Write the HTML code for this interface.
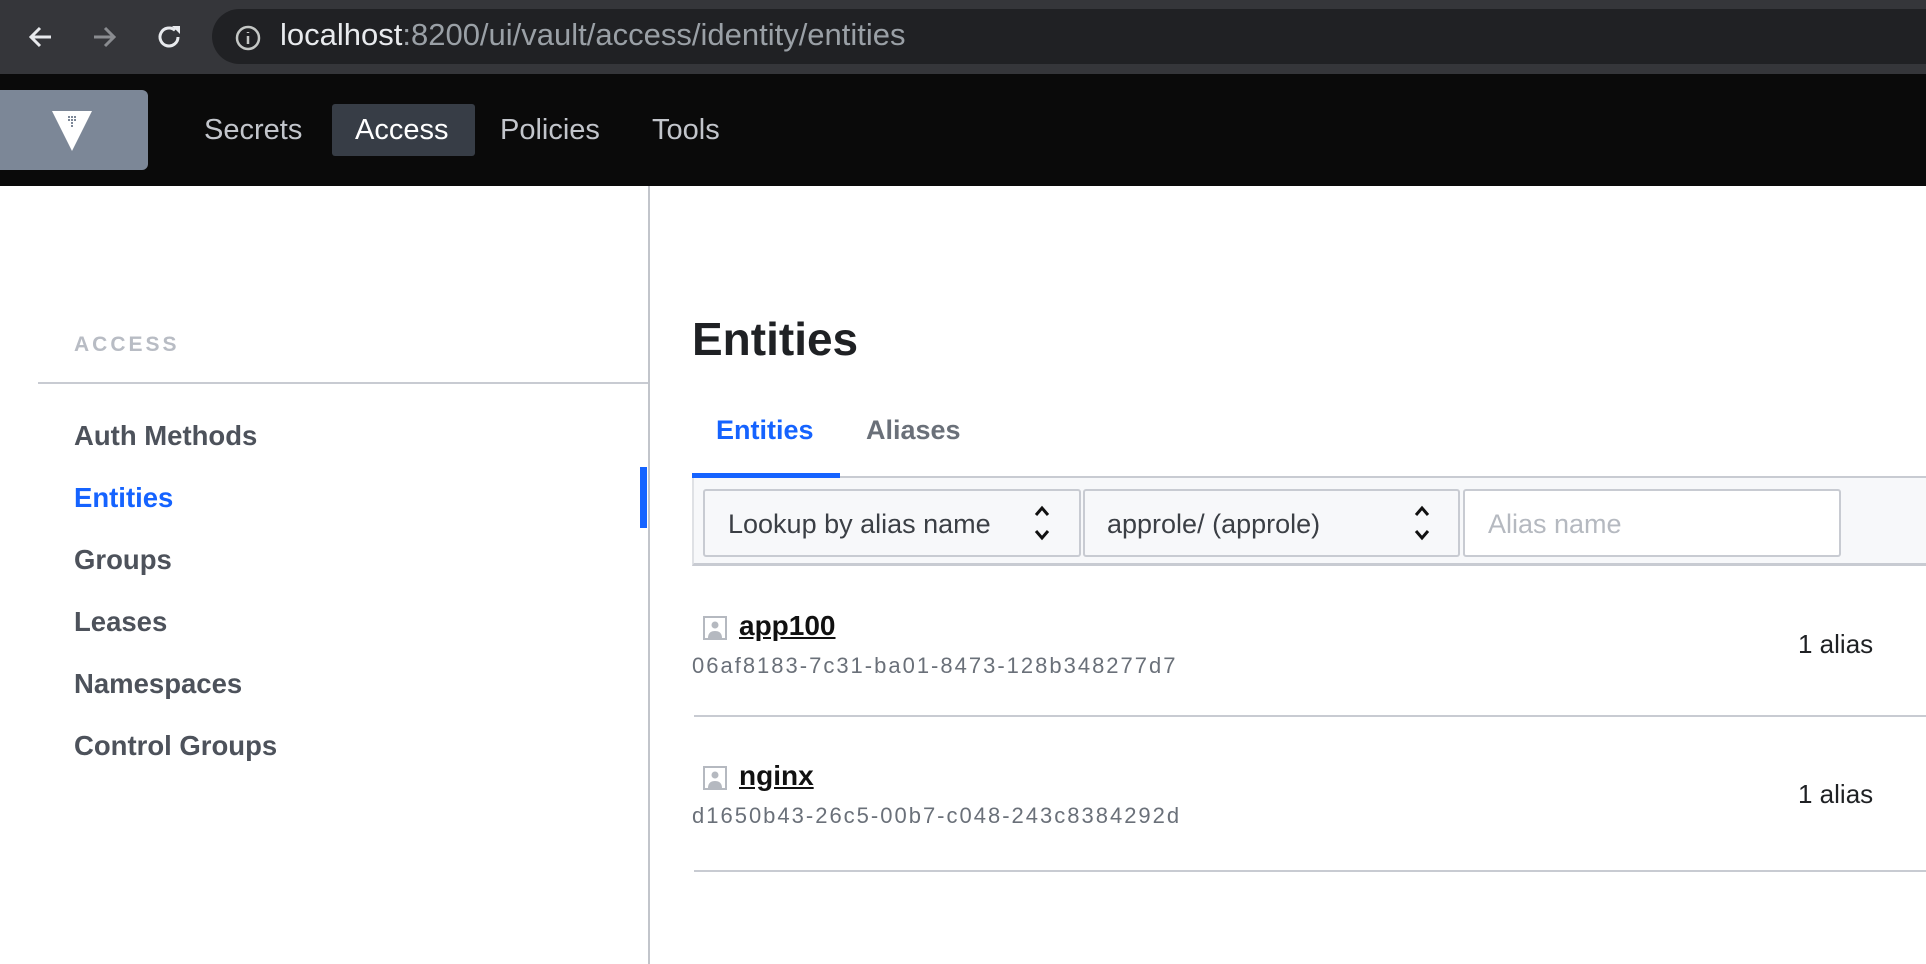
<!DOCTYPE html>
<html><head><meta charset="utf-8"><style>
*{margin:0;padding:0;box-sizing:border-box}
body{width:1926px;height:964px;overflow:hidden;background:#fff;font-family:"Liberation Sans",sans-serif;position:relative;color:#1f2124}
.a{position:absolute;white-space:nowrap}
</style></head><body>
<div class="a" style="left:0;top:0;width:1926px;height:74px;background:#35363a"></div>
<div class="a" style="left:212px;top:9px;width:1714px;height:55px;background:#202124;border-radius:28px 0 0 28px"></div>
<svg class="a" style="left:26px;top:22px" width="30" height="30" viewBox="0 0 30 30"><path d="M25 15H5M14 6L5 15l9 9" stroke="#e8eaed" stroke-width="3" fill="none"/></svg>
<svg class="a" style="left:89px;top:22px" width="30" height="30" viewBox="0 0 30 30"><path d="M5 15h20M16 6l9 9-9 9" stroke="#8a8c90" stroke-width="3" fill="none"/></svg>
<svg class="a" style="left:153px;top:21px" width="32" height="32" viewBox="0 0 32 32"><path d="M25 16a9 9 0 1 1-3-6.7" stroke="#e8eaed" stroke-width="3" fill="none"/><path d="M19 5h8v8z" fill="#e8eaed"/></svg>
<svg class="a" style="left:234px;top:24px" width="28" height="28" viewBox="0 0 28 28"><circle cx="14" cy="14" r="11" stroke="#c4c7c5" stroke-width="2.5" fill="none"/><path d="M14 12v8M14 8v1" stroke="#c4c7c5" stroke-width="2.5"/></svg>
<div class="a" style="left:280px;top:17px;font-size:31px;color:#e8eaed">localhost<span style="color:#9aa0a6">:8200/ui/vault/access/identity/entities</span></div>

<div class="a" style="left:0;top:74px;width:1926px;height:112px;background:#0a0a0a"></div>
<div class="a" style="left:0;top:90px;width:148px;height:80px;background:#7c8797;border-radius:0 6px 6px 0"></div>
<svg class="a" style="left:52px;top:111px" width="40" height="42" viewBox="0 0 40 42"><path d="M0 0h40L20 40z" fill="#fff"/><g fill="#7c8797"><rect x="16" y="5" width="2" height="2"/><rect x="19" y="5" width="2" height="2"/><rect x="22" y="5" width="2" height="2"/><rect x="16" y="8" width="2" height="2"/><rect x="19" y="8" width="2" height="2"/><rect x="22" y="8" width="2" height="2"/><rect x="19" y="11" width="2" height="2"/><rect x="19" y="14" width="2" height="2"/></g></svg>
<div class="a" style="left:332px;top:104px;width:143px;height:52px;background:#373d46;border-radius:3px"></div>
<div class="a" style="left:204px;top:114px;font-size:29px;color:#c2c5cb">Secrets</div>
<div class="a" style="left:355px;top:114px;font-size:29px;color:#fff">Access</div>
<div class="a" style="left:500px;top:114px;font-size:29px;color:#c2c5cb">Policies</div>
<div class="a" style="left:652px;top:114px;font-size:29px;color:#c2c5cb">Tools</div>

<div class="a" style="left:648px;top:186px;width:2px;height:778px;background:#c2c5cb"></div>
<div class="a" style="left:74px;top:333px;font-size:21px;font-weight:bold;letter-spacing:3px;color:#b8bcc4">ACCESS</div>
<div class="a" style="left:38px;top:382px;width:610px;height:2px;background:#c8cbd2"></div>
<div class="a" style="left:74px;top:421px;font-size:27.5px;font-weight:bold;color:#4d525b;line-height:30px">Auth Methods</div>
<div class="a" style="left:74px;top:483px;font-size:27.5px;font-weight:bold;color:#1563ff;line-height:30px">Entities</div>
<div class="a" style="left:74px;top:545px;font-size:27.5px;font-weight:bold;color:#4d525b;line-height:30px">Groups</div>
<div class="a" style="left:74px;top:607px;font-size:27.5px;font-weight:bold;color:#4d525b;line-height:30px">Leases</div>
<div class="a" style="left:74px;top:669px;font-size:27.5px;font-weight:bold;color:#4d525b;line-height:30px">Namespaces</div>
<div class="a" style="left:74px;top:731px;font-size:27.5px;font-weight:bold;color:#4d525b;line-height:30px">Control Groups</div>
<div class="a" style="left:640px;top:467px;width:7px;height:61px;background:#1563ff"></div>

<div class="a" style="left:692px;top:312px;font-size:46px;font-weight:bold;color:#1f2124;line-height:54px">Entities</div>
<div class="a" style="left:716px;top:415px;font-size:27px;font-weight:bold;color:#1563ff;line-height:30px">Entities</div>
<div class="a" style="left:866px;top:415px;font-size:27px;font-weight:bold;color:#6a7079;line-height:30px">Aliases</div>
<div class="a" style="left:692px;top:476px;width:1234px;height:2px;background:#c8cbd2"></div>
<div class="a" style="left:692px;top:473px;width:148px;height:5px;background:#1563ff"></div>

<div class="a" style="left:692px;top:478px;width:1234px;height:88px;background:#f7f8fa;border-bottom:3px solid #c8cbd2;border-left:2px solid #dfe1e5"></div>
<div class="a" style="left:703px;top:489px;width:378px;height:68px;background:#f7f8fa;border:2px solid #c8cbd2;border-radius:3px"></div>
<div class="a" style="left:1083px;top:489px;width:377px;height:68px;background:#f7f8fa;border:2px solid #c8cbd2;border-radius:3px"></div>
<div class="a" style="left:1463px;top:489px;width:378px;height:68px;background:#fff;border:2px solid #c8cbd2;border-radius:3px"></div>
<div class="a" style="left:728px;top:509px;font-size:27px;color:#3b3f45">Lookup by alias name</div>
<div class="a" style="left:1107px;top:509px;font-size:27px;color:#3b3f45">approle/ (approle)</div>
<div class="a" style="left:1488px;top:509px;font-size:27px;color:#b5b9c0">Alias name</div>
<svg class="a" style="left:1032px;top:503px" width="20" height="40" viewBox="0 0 20 40"><path d="M4 12l6-7 6 7M4 28l6 7 6-7" stroke="#111" stroke-width="3" fill="none"/></svg>
<svg class="a" style="left:1412px;top:503px" width="20" height="40" viewBox="0 0 20 40"><path d="M4 12l6-7 6 7M4 28l6 7 6-7" stroke="#111" stroke-width="3" fill="none"/></svg>

<svg class="a" style="left:703px;top:616px" width="24" height="24" viewBox="0 0 24 24"><rect x="1" y="1" width="22" height="22" fill="none" stroke="#b5b9c0" stroke-width="2"/><circle cx="12" cy="9" r="3.5" fill="#b5b9c0"/><path d="M5 22c0-5 3-7 7-7s7 2 7 7z" fill="#b5b9c0"/></svg>
<div class="a" style="left:739px;top:610px;font-size:28px;font-weight:bold;color:#111;text-decoration:underline">app100</div>
<div class="a" style="left:692px;top:653px;font-size:22px;color:#6a7079;letter-spacing:2px">06af8183-7c31-ba01-8473-128b348277d7</div>
<div class="a" style="left:1798px;top:629px;font-size:26px;color:#1f2124">1 alias</div>
<div class="a" style="left:694px;top:715px;width:1232px;height:2px;background:#c8cbd2"></div>

<svg class="a" style="left:703px;top:766px" width="24" height="24" viewBox="0 0 24 24"><rect x="1" y="1" width="22" height="22" fill="none" stroke="#b5b9c0" stroke-width="2"/><circle cx="12" cy="9" r="3.5" fill="#b5b9c0"/><path d="M5 22c0-5 3-7 7-7s7 2 7 7z" fill="#b5b9c0"/></svg>
<div class="a" style="left:739px;top:760px;font-size:28px;font-weight:bold;color:#111;text-decoration:underline">nginx</div>
<div class="a" style="left:692px;top:803px;font-size:22px;color:#6a7079;letter-spacing:2px">d1650b43-26c5-00b7-c048-243c8384292d</div>
<div class="a" style="left:1798px;top:779px;font-size:26px;color:#1f2124">1 alias</div>
<div class="a" style="left:694px;top:870px;width:1232px;height:2px;background:#c8cbd2"></div>
</body></html>
